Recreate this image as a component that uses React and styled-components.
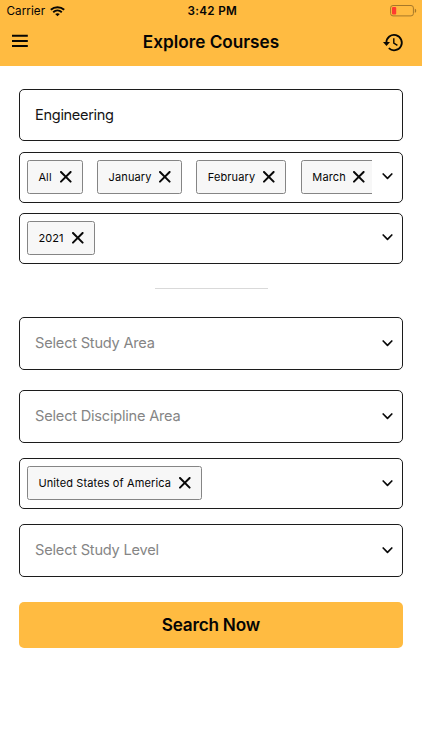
import React from "react";
import styled, { createGlobalStyle } from "styled-components";

const GlobalStyle = createGlobalStyle`
  * { box-sizing: border-box; }
  body { margin: 0; background: #fff; font-family: Inter, "Liberation Sans", sans-serif; color: #050505; }
`;

const Screen = styled.div`
  width: 422px;
  height: 750px;
  overflow: hidden;
  background: #fff;
`;

const Header = styled.header`
  height: 65.5px;
  background: #ffbb41;
`;

const StatusBar = styled.div`
  display: grid;
  grid-template-columns: 1fr auto 1fr;
  align-items: center;
  height: 22px;
  padding: 0 5px 0 6.5px;
`;

const Carrier = styled.div`
  display: flex;
  align-items: center;
  gap: 5px;
  font-size: 11.7px;
  line-height: 22px;
  letter-spacing: 0.05px;
`;

const Clock = styled.div`
  margin-left: 1px;
  font-size: 11.7px;
  font-weight: 600;
  line-height: 22px;
  letter-spacing: 0.3px;
`;

const Battery = styled.svg`
  justify-self: end;
  display: block;
`;

const NavBar = styled.nav`
  display: grid;
  grid-template-columns: 1fr auto 1fr;
  align-items: center;
  height: 41px;
  padding: 0 18px 0 11px;
`;

const IconButton = styled.button`
  display: flex;
  justify-self: ${(p) => (p.$end ? "end" : "start")};
  padding: 0 0 ${(p) => (p.$end ? 0 : 3)}px;
  border: 0;
  background: none;
  color: inherit;
`;

const Title = styled.h1`
  margin: 0 0 1px 7px;
  font-size: 17.2px;
  font-weight: 600;
  line-height: 24px;
`;

const Form = styled.main`
  display: flex;
  flex-direction: column;
  padding: 23.1px 19px 0 18.6px;
`;

const Field = styled.div`
  display: flex;
  align-items: center;
  justify-content: space-between;
  height: ${(p) => (p.$tags ? 51 : 52.6)}px;
  margin-bottom: ${(p) => p.$gap}px;
  padding: 0 9.3px 1px ${(p) => (p.$tags ? 7.5 : 15.5)}px;
  border: 1.4px solid #1c1c1c;
  border-radius: 5px;
  background: #fff;
`;

const Value = styled.span`
  padding-top: ${(p) => (p.$muted ? 0 : 2)}px;
  font-size: 14.6px;
  line-height: 20px;
  letter-spacing: ${(p) => (p.$muted ? -0.22 : -0.35)}px;
  color: ${(p) => (p.$muted ? "#858585" : "#151515")};
`;

const TagList = styled.div`
  display: flex;
  gap: 14.7px;
  width: 345px;
  overflow: hidden;
`;

const Tag = styled.span`
  display: flex;
  flex: none;
  align-items: center;
  justify-content: space-between;
  width: ${(p) => p.$width}px;
  height: 34px;
  padding: 0 10px 0 10.3px;
  border: 1px solid #858585;
  border-radius: 2.5px;
  background: #f7f7f7;
  font-size: 11px;
  line-height: 16px;
  letter-spacing: 0.12px;
  white-space: nowrap;
`;

const Divider = styled.hr`
  width: 113px;
  height: 1px;
  margin: 0 auto 28.7px 136px;
  border: 0;
  background: #d9d9d9;
`;

const SearchButton = styled.button`
  height: 46px;
  padding: 0;
  border: 0;
  border-radius: 5px;
  background: #ffbb41;
  color: #050505;
  font: 600 17.2px/24px Inter, "Liberation Sans", sans-serif;
  letter-spacing: -0.22px;
`;

const WifiIcon = () => (
  <svg width="15" height="11" viewBox="0 0 15 11" fill="none" stroke="#080704" strokeWidth="1.9">
    <path d="M.8 3.8C4.6.3 10.4.3 14.2 3.8M3.2 6.2c2.5-2.2 6.1-2.2 8.6 0" />
    <path d="M7.5 10.2 5.2 8q2.3-1.7 4.6 0Z" fill="#080704" stroke="none" />
  </svg>
);

const BatteryIcon = () => (
  <Battery width="27" height="12" viewBox="0 0 27 12">
    <rect x=".6" y=".5" width="22.8" height="10.4" rx="2.4" fill="none" stroke="#a67829" />
    <rect x="2" y="2" width="4.2" height="7.5" rx="1" fill="#ff3b30" />
    <path d="M24.8 3.8c1.9.5 1.9 3.6 0 4.1Z" fill="#a67829" />
  </Battery>
);

const MenuIcon = () => (
  <svg width="17" height="14" viewBox="0 0 17 14" stroke="#080704" strokeWidth="2">
    <path d="M1 1.8h15.8M1 6.9h15.8M1 12h15.8" />
  </svg>
);

const HistoryIcon = () => (
  <svg width="21" height="20" viewBox="0 0 21 20" fill="none" stroke="#080704" strokeWidth="1.8">
    <path d="M3.4 9.7A7.7 7.7 0 1 1 5.8 15.2" />
    <path d="M0 9h7L3.5 12.9Z" fill="#080704" stroke="none" />
    <path d="M10.8 5.2v4.9l3.6 2.2" strokeWidth="1.4" />
  </svg>
);

const CloseIcon = () => (
  <svg width="12" height="12" viewBox="0 0 12 12" fill="none" stroke="#080808" strokeWidth="2" strokeLinecap="round">
    <path d="m1 1 9.6 9.6M10.6 1 1 10.6" />
  </svg>
);

const Chevron = () => (
  <svg width="11" height="7" viewBox="0 0 11 7" fill="none" stroke="#080808" strokeWidth="1.7" strokeLinecap="round" strokeLinejoin="round">
    <path d="m1.2 1 4.3 4.3L9.8 1" />
  </svg>
);

const TagField = ({ tags, gap }) => (
  <Field $tags $gap={gap}>
    <TagList>
      {tags.map(([label, width]) => (
        <Tag key={label} $width={width}>
          {label}
          <CloseIcon />
        </Tag>
      ))}
    </TagList>
    <Chevron />
  </Field>
);

const SelectField = ({ label, gap }) => (
  <Field $gap={gap}>
    <Value $muted>{label}</Value>
    <Chevron />
  </Field>
);

export default function App() {
  return (
    <Screen>
      <GlobalStyle />
      <Header>
        <StatusBar>
          <Carrier>Carrier<WifiIcon /></Carrier>
          <Clock>3:42 PM</Clock>
          <BatteryIcon />
        </StatusBar>
        <NavBar>
          <IconButton aria-label="Menu"><MenuIcon /></IconButton>
          <Title>Explore Courses</Title>
          <IconButton $end aria-label="History"><HistoryIcon /></IconButton>
        </NavBar>
      </Header>
      <Form>
        <Field $gap={10.4}><Value>Engineering</Value></Field>
        <TagField
          gap={10}
          tags={[["All", 55.5], ["January", 84.5], ["February", 89.9], ["March", 75.3]]}
        />
        <TagField gap={24} tags={[["2021", 68]]} />
        <Divider />
        <SelectField label="Select Study Area" gap={20.4} />
        <SelectField label="Select Discipline Area" gap={15.2} />
        <TagField gap={15.2} tags={[["United States of America", 175]]} />
        <SelectField label="Select Study Level" gap={25.2} />
        <SearchButton type="button">Search Now</SearchButton>
      </Form>
    </Screen>
  );
}
